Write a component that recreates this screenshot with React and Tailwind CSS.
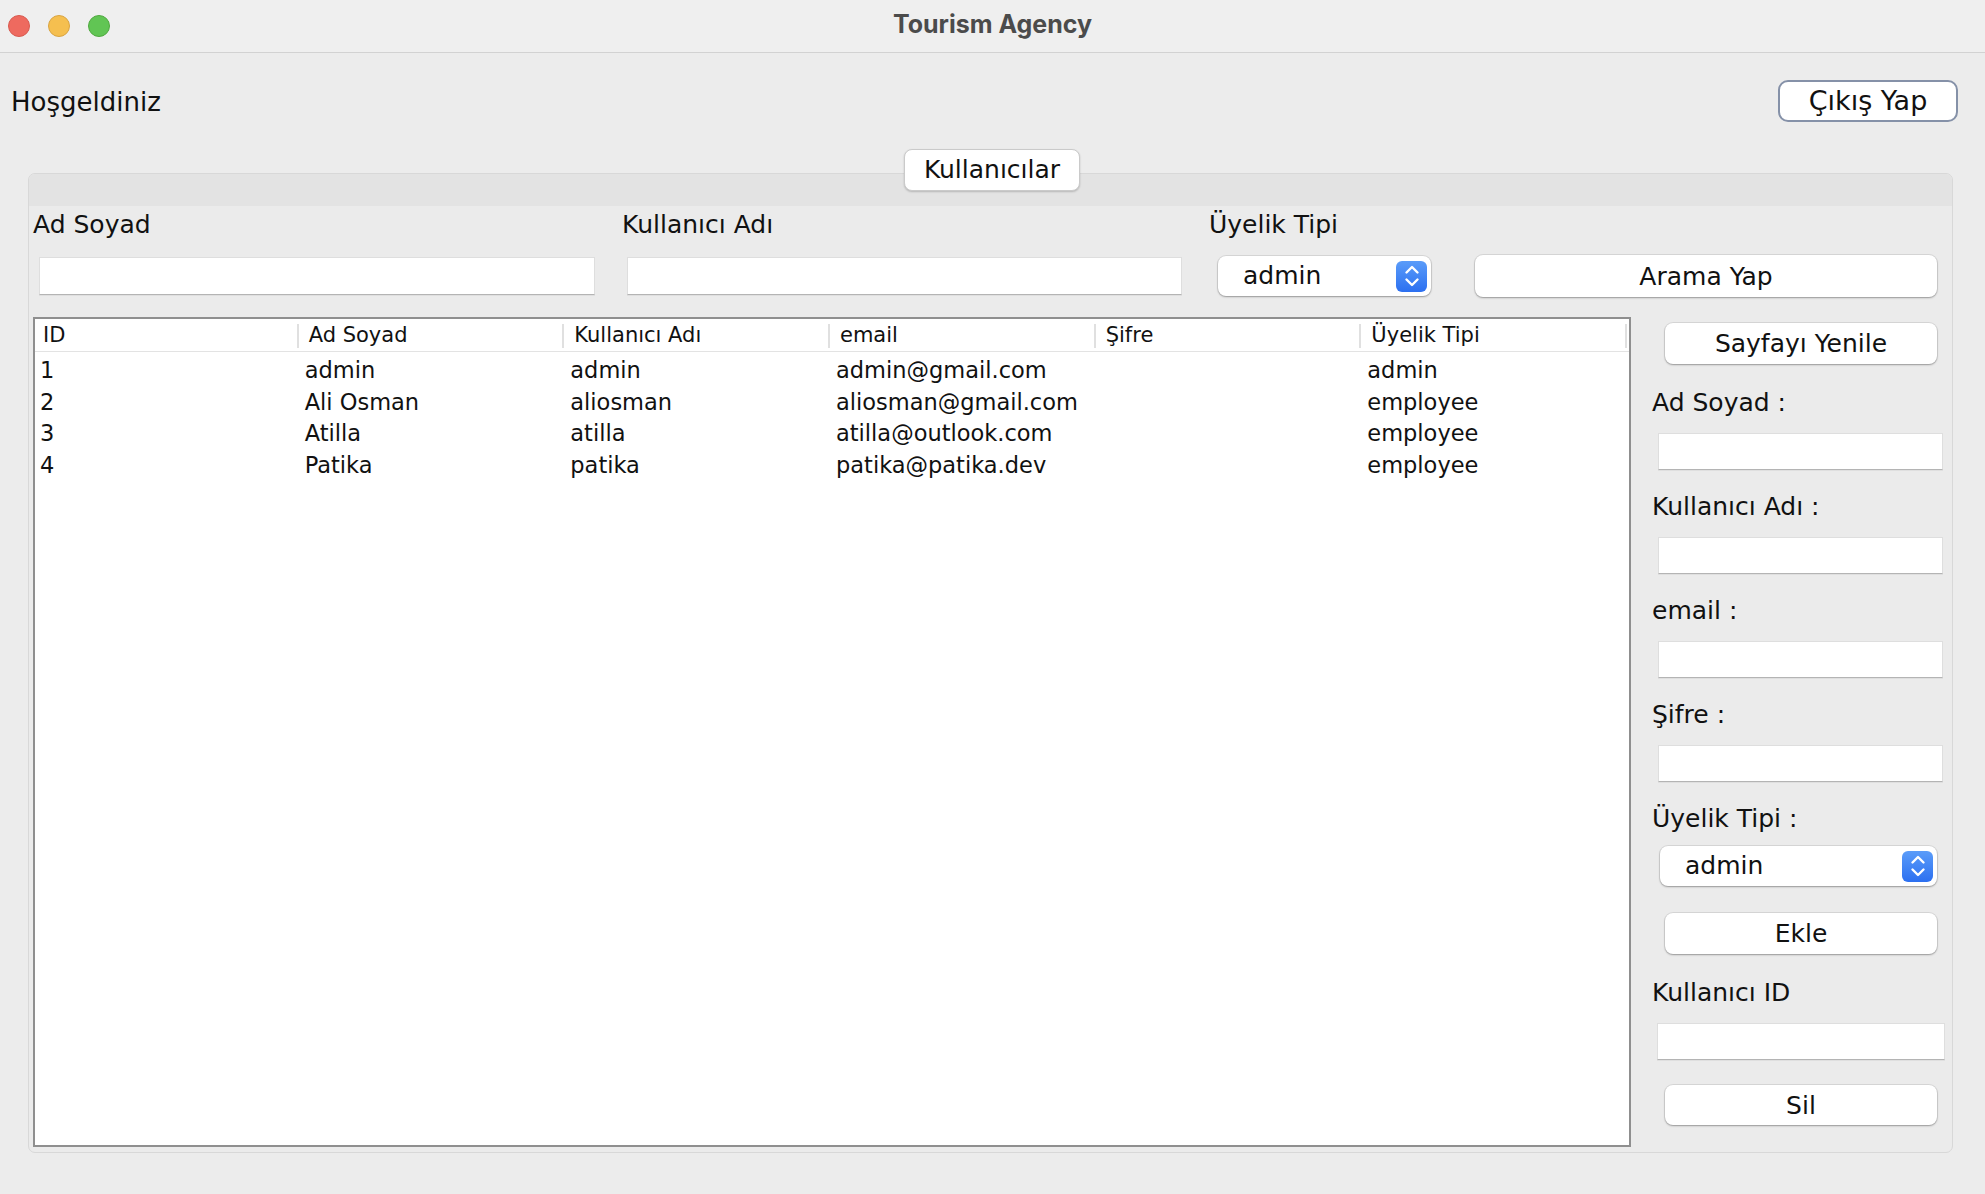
import React from 'react';

const users = [
  { id: 1, name: 'admin', username: 'admin', email: 'admin@gmail.com', pass: '', type: 'admin' },
  { id: 2, name: 'Ali Osman', username: 'aliosman', email: 'aliosman@gmail.com', pass: '', type: 'employee' },
  { id: 3, name: 'Atilla', username: 'atilla', email: 'atilla@outlook.com', pass: '', type: 'employee' },
  { id: 4, name: 'Patika', username: 'patika', email: 'patika@patika.dev', pass: '', type: 'employee' },
];

const columns = ['ID', 'Ad Soyad', 'Kullanıcı Adı', 'email', 'Şifre', 'Üyelik Tipi'];

const MacButton = ({ children, className = '' }) => (
  <button
    className={`bg-white rounded-[8px] shadow-[0_0_0_1px_rgba(0,0,0,0.08),0_1px_2px_rgba(0,0,0,0.3)] text-[25px] text-[#111] leading-none flex items-center justify-center ${className}`}
  >
    {children}
  </button>
);

const TextField = ({ className = '' }) => (
  <div
    className={`bg-white border border-[#dedede] border-b-[#b4b4b4] shadow-[0_1px_0_rgba(0,0,0,0.05)] ${className}`}
  />
);

const Stepper = () => (
  <div className="w-[31px] h-[31px] rounded-[6px] bg-gradient-to-b from-[#5b9cf9] to-[#2c6ff0] flex items-center justify-center">
    <svg width="20" height="28" viewBox="0 0 20 28" fill="none">
      <path d="M4.5 10.5 L10 5 L15.5 10.5" stroke="white" strokeWidth="2.4" strokeLinecap="round" strokeLinejoin="round" />
      <path d="M4.5 17.5 L10 23 L15.5 17.5" stroke="white" strokeWidth="2.4" strokeLinecap="round" strokeLinejoin="round" />
    </svg>
  </div>
);

const Combo = ({ className = '' }) => (
  <div
    className={`bg-white rounded-[8px] shadow-[0_0_0_1px_rgba(0,0,0,0.08),0_1px_2px_rgba(0,0,0,0.3)] flex items-center justify-between pl-[25px] pr-[4px] ${className}`}
  >
    <span className="text-[25px] text-[#111]">admin</span>
    <Stepper />
  </div>
);

const SideLabel = ({ children, className = '' }) => (
  <div className={`h-[32px] leading-[32px] pt-[3px] text-[25px] text-[#111] ${className}`}>{children}</div>
);

export default function App() {
  return (
    <div className="w-[1985px] h-[1194px] bg-[#ececec] font-['DejaVu_Sans','Liberation_Sans',sans-serif] flex flex-col overflow-hidden">
      {/* title bar */}
      <div className="h-[53px] bg-[#efefef] border-b border-[#d2d2d2] grid grid-cols-[1fr_auto_1fr] items-center shrink-0">
        <div className="flex items-center gap-[18px] pl-[8px]">
          <div className="w-[22px] h-[22px] rounded-full bg-[#ee6a5f] border border-[#d85a4f]" />
          <div className="w-[22px] h-[22px] rounded-full bg-[#f5bf4f] border border-[#d9a441]" />
          <div className="w-[22px] h-[22px] rounded-full bg-[#61c554] border border-[#4fa93f]" />
        </div>
        <div className="font-['Inter',sans-serif] font-bold text-[25px] text-[#4b4b4b] -mt-[2px]">Tourism Agency</div>
        <div />
      </div>

      {/* welcome row */}
      <div className="h-[96px] flex items-center justify-between pl-[11px] pr-[27px] shrink-0">
        <span className="text-[26px] text-[#111] pt-[2px]">Hoşgeldiniz</span>
        <button className="w-[180px] h-[42px] bg-white rounded-[10px] border-2 border-[#8591a8] text-[27px] text-[#111] flex items-center justify-center">
          Çıkış Yap
        </button>
      </div>

      {/* tabbed pane */}
      <div className="ml-[28px] mr-[32px] flex flex-col">
        <div className="flex justify-center relative z-10">
          <div className="w-[176px] h-[42px] bg-white rounded-[8px] border border-[#cacaca] shadow-[0_1px_2px_rgba(0,0,0,0.2)] flex items-center justify-center text-[25px] text-[#111] ml-[3px]">
            Kullanıcılar
          </div>
        </div>
        <div className="-mt-[18px] h-[980px] border border-[#d8d8d8] rounded-[7px] bg-[#ebebeb] flex flex-col overflow-hidden">
          <div className="h-[32px] bg-[#e3e3e3] shrink-0" />

          {/* search labels */}
          <div className="flex h-[32px] items-center pt-[5px] pl-[4px] text-[25px] text-[#111]">
            <span className="w-[589px]">Ad Soyad</span>
            <span className="w-[587px]">Kullanıcı Adı</span>
            <span>Üyelik Tipi</span>
          </div>

          {/* search fields */}
          <div className="flex items-center h-[42px] mt-[17px] pl-[10px]">
            <TextField className="w-[556px] h-[38px]" />
            <TextField className="w-[555px] h-[38px] ml-[32px]" />
            <Combo className="w-[213px] h-[40px] ml-[36px]" />
            <MacButton className="w-[462px] h-[42px] ml-[44px]">Arama Yap</MacButton>
          </div>

          {/* body */}
          <div className="flex mt-[20px] pl-[4px]">
            {/* table */}
            <div className="w-[1598px] h-[830px] bg-white border-2 border-[#8f8f8f]">
              <div className="grid grid-cols-6 h-[33px] border-b border-[#e3e3e3] text-[21px] text-[#111]">
                {columns.map((c) => (
                  <div key={c} className="flex items-center justify-between pl-[8px] pt-[1px]">
                    <span>{c}</span>
                    <div className="w-[2px] h-[24px] bg-[#e0e0e0] mr-[2px]" />
                  </div>
                ))}
              </div>
              <div className="pt-[2px]">
                {users.map((u) => (
                  <div key={u.id} className="grid grid-cols-6 h-[31.7px] items-center text-[22.5px] text-[#111]">
                    <span className="pl-[5px]">{u.id}</span>
                    <span className="pl-[4px]">{u.name}</span>
                    <span className="pl-[4px]">{u.username}</span>
                    <span className="pl-[4px]">{u.email}</span>
                    <span className="pl-[4px]">{u.pass}</span>
                    <span className="pl-[4px]">{u.type}</span>
                  </div>
                ))}
              </div>
            </div>

            {/* side form */}
            <div className="ml-[21px] w-[293px] flex flex-col">
              <MacButton className="w-[272px] h-[41px] mt-[6px] ml-[13px]">Sayfayı Yenile</MacButton>
              <SideLabel className="mt-[20px]">Ad Soyad :</SideLabel>
              <TextField className="w-[285px] h-[37px] mt-[17px] ml-[6px]" />
              <SideLabel className="mt-[18px]">Kullanıcı Adı :</SideLabel>
              <TextField className="w-[285px] h-[37px] mt-[17px] ml-[6px]" />
              <SideLabel className="mt-[18px]">email :</SideLabel>
              <TextField className="w-[285px] h-[37px] mt-[17px] ml-[6px]" />
              <SideLabel className="mt-[18px]">Şifre :</SideLabel>
              <TextField className="w-[285px] h-[37px] mt-[17px] ml-[6px]" />
              <SideLabel className="mt-[18px]">Üyelik Tipi :</SideLabel>
              <Combo className="w-[277px] h-[40px] mt-[14px] ml-[8px]" />
              <MacButton className="w-[272px] h-[41px] mt-[27px] ml-[13px]">Ekle</MacButton>
              <SideLabel className="mt-[20px]">Kullanıcı ID</SideLabel>
              <TextField className="w-[288px] h-[37px] mt-[17px] ml-[5px]" />
              <MacButton className="w-[272px] h-[40px] mt-[25px] ml-[13px]">Sil</MacButton>
            </div>
          </div>
        </div>
      </div>
    </div>
  );
}
